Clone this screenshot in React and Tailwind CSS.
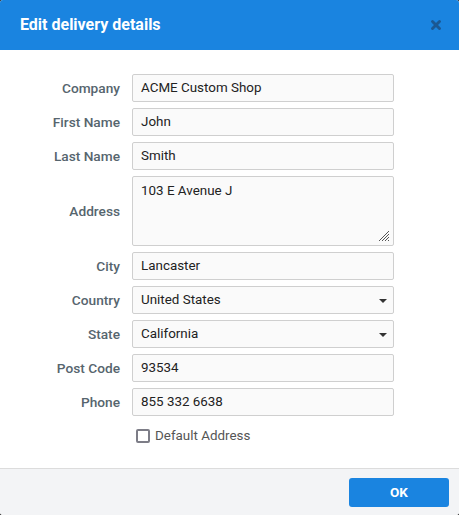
import { X } from 'lucide-react'

const Field = ({ label, value, select }) => {
    return (
        <div className="flex items-center gap-3">
            <label className="w-[120px] text-right text-[13.7px] font-medium text-[#56656e]">{label}</label>
            <div className="relative flex h-[28px] w-[262px] items-center rounded-[2px] border border-[#cfcfcf] bg-[#fafafa] px-2 text-[13.4px] text-[#222]">
                {value}
                {select && (
                    <span className="absolute right-[6px] top-[12px] h-0 w-0 border-x-[4px] border-t-[4px] border-x-transparent border-t-[#333]"></span>
                )}
            </div>
        </div>
    )
}

const App = () => {
    return (
        <div className="h-[515px] w-[459px] bg-[#2b2b2b]" style={{ fontFamily: 'Roboto, "Liberation Sans", sans-serif' }}>
            <div className="flex h-full flex-col overflow-hidden rounded-[3px] bg-white">
                <div className="flex h-[50px] items-center justify-between bg-[#1a84e0] pl-5 pr-[16px]">
                    <h2 className="text-[16px] font-bold text-white">Edit delivery details</h2>
                    <X className="h-[14px] w-[14px] text-[#1b5893]" strokeWidth={5} />
                </div>

                <div className="flex flex-1 flex-col gap-[6px] pt-[24px]">
                    <Field label="Company" value="ACME Custom Shop" />
                    <Field label="First Name" value="John" />
                    <Field label="Last Name" value="Smith" />
                    <div className="flex items-center gap-3">
                        <label className="w-[120px] text-right text-[13.7px] font-medium text-[#56656e]">Address</label>
                        <div className="relative h-[70px] w-[262px] rounded-[2px] border border-[#cfcfcf] bg-[#fafafa] px-2 pt-[4px] text-[13.4px] text-[#222]">
                            103 E Avenue J
                            <svg className="absolute bottom-[3px] right-[3px]" width="13" height="13" viewBox="0 0 13 13">
                                <path d="M12 2 L2 12 M12 5 L5 12 M12 8 L8 12 M12 11 L11 12" stroke="#555" strokeWidth="1" fill="none" />
                            </svg>
                        </div>
                    </div>
                    <Field label="City" value="Lancaster" />
                    <Field label="Country" value="United States" select />
                    <Field label="State" value="California" select />
                    <Field label="Post Code" value="93534" />
                    <Field label="Phone" value="855 332 6638" />
                    <div className="mt-[4px] flex items-center gap-[5px] pl-[136px]">
                        <span className="h-[14px] w-[14px] rounded-[2px] border-2 border-[#7d7d87] bg-white"></span>
                        <span className="text-[13.4px] text-[#555]">Default Address</span>
                    </div>
                </div>

                <div className="flex h-[47px] items-center justify-end border-t border-[#dcdcdc] bg-[#f3f4f6] pr-[10px]">
                    <button className="h-[29px] w-[100px] rounded-[3px] bg-[#1a84e0] text-[13.5px] font-bold text-white">OK</button>
                </div>
            </div>
        </div>
    )
}

export default App
